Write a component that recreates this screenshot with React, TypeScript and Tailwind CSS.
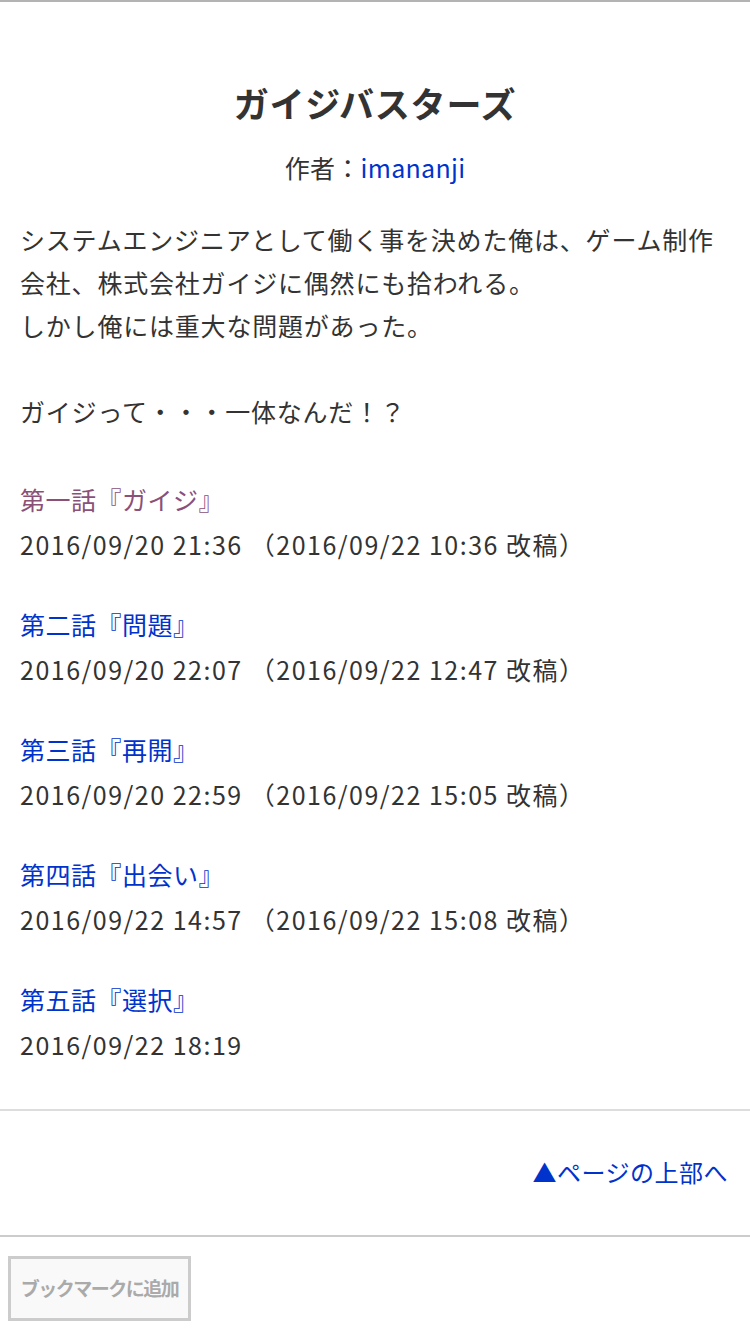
import React from "react";

const episodes = [
  { title: "第一話『ガイジ』", date: "2016/09/20 21:36 （2016/09/22 10:36 改稿）", visited: true },
  { title: "第二話『問題』", date: "2016/09/20 22:07 （2016/09/22 12:47 改稿）" },
  { title: "第三話『再開』", date: "2016/09/20 22:59 （2016/09/22 15:05 改稿）" },
  { title: "第四話『出会い』", date: "2016/09/22 14:57 （2016/09/22 15:08 改稿）" },
  { title: "第五話『選択』", date: "2016/09/22 18:19" },
];

export default function App() {
  return (
    <div
      className="w-[750px] min-h-[1334px] bg-white text-[#333]"
      style={{ fontFamily: '"Noto Sans CJK JP", "Noto Sans", sans-serif' }}
    >
      <div className="h-[2px] bg-[#b3b3b3]" />
      <div className="pt-[78px] text-center">
        <h1 className="text-[35px] font-bold leading-[46px] tracking-[0.8px] text-[#333]">ガイジバスターズ</h1>
        <p className="mt-[24px] text-[25px] leading-[34px] tracking-[0.3px]">
          作者：<span className="text-[#0033cc]">imananji</span>
        </p>
      </div>
      <div className="px-[20px] pt-[34px] text-[25px] leading-[43px] tracking-[0.8px]">
        <p>システムエンジニアとして働く事を決めた俺は、ゲーム制作</p>
        <p>会社、株式会社ガイジに偶然にも拾われる。</p>
        <p>しかし俺には重大な問題があった。</p>
        <p>&nbsp;</p>
        <p>ガイジって・・・一体なんだ！？</p>
      </div>
      <div className="px-[20px] pt-[44px] flex flex-col gap-[35px]">
        {episodes.map((e) => (
          <div key={e.title} className="flex flex-col">
            <span
              className={`text-[25px] leading-[45px] tracking-[0.5px] ${e.visited ? "text-[#8a5078]" : "text-[#0033cc]"}`}
            >
              {e.title}
            </span>
            <span className="text-[25px] leading-[45px] tracking-[1.5px] text-[#333]">{e.date}</span>
          </div>
        ))}
      </div>
      <div className="mt-[42px] h-[2px] bg-[#dddddd]" />
      <div className="flex justify-end px-[22px] pt-[40px] pb-[42px]">
        <span className="text-[24px] leading-[42px] tracking-[0.5px] text-[#0033cc]">▲ページの上部へ</span>
      </div>
      <div className="h-[2px] bg-[#cccccc]" />
      <div className="px-[8px] pt-[19px]">
        <div className="w-[183px] h-[65px] border-[3px] border-[#cccccc] bg-[#f9f9f9] flex items-center justify-center">
          <span className="whitespace-nowrap text-[19px] font-bold tracking-[-1.5px] text-[#aaaaaa]">ブックマークに追加</span>
        </div>
      </div>
    </div>
  );
}
